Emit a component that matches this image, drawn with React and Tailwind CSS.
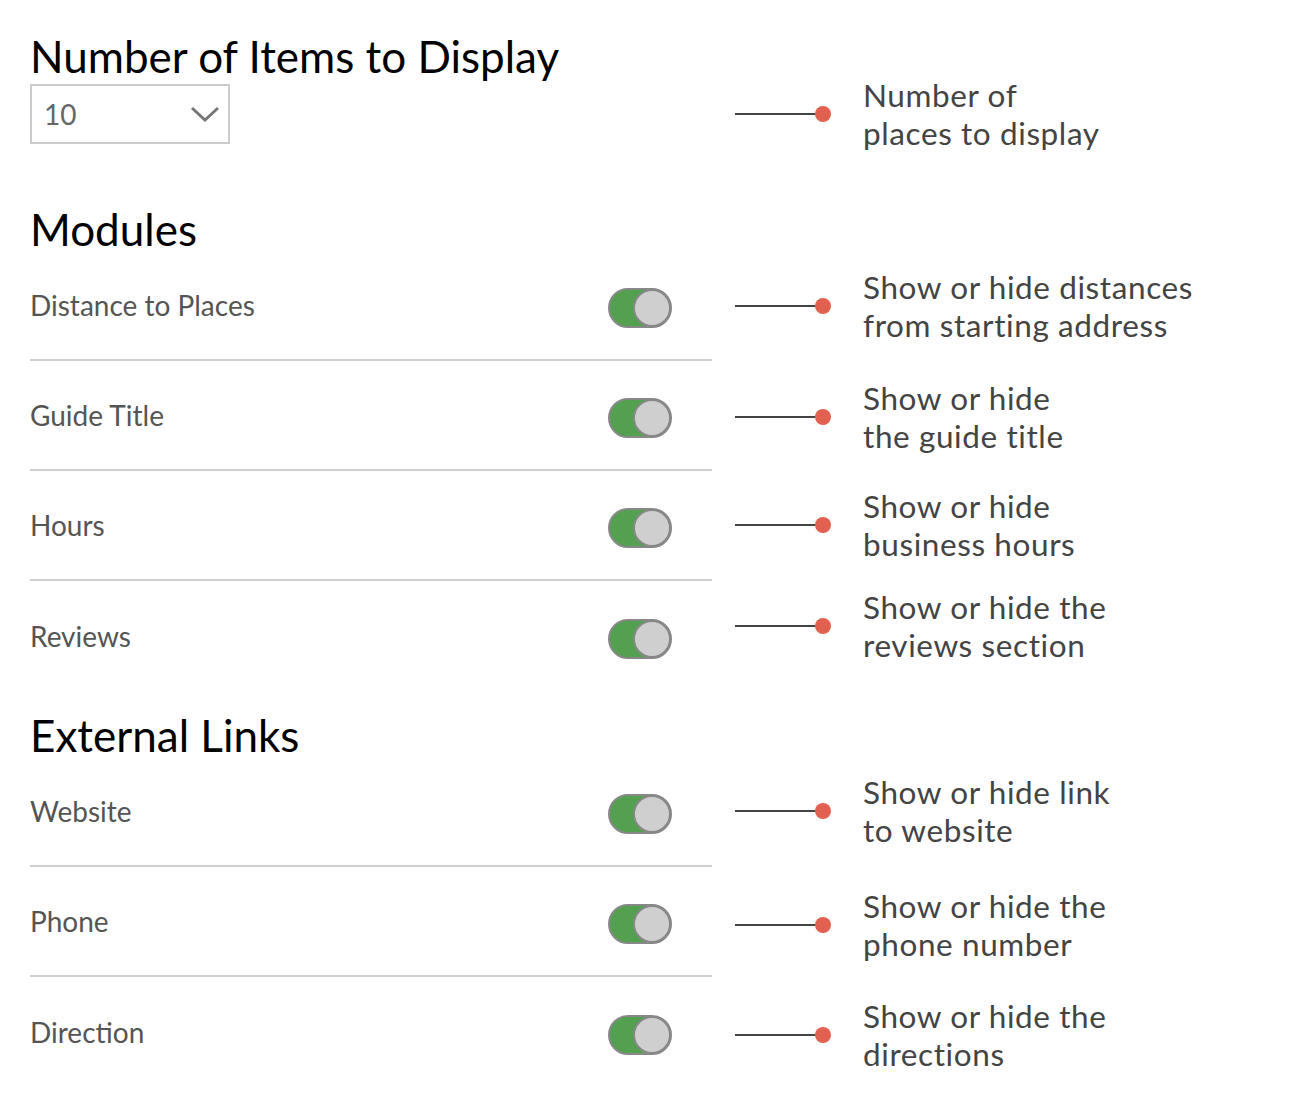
import React from "react";

function Toggle() {
  return (
    <div className="mt-[5px] flex h-[40px] w-[64px] items-center justify-end rounded-full border-2 border-[#888] bg-[#53a050]">
      <div className="h-[38px] w-[38px] -mr-[1px] rounded-full border-2 border-[#888] bg-[#cfcfcf]" />
    </div>
  );
}

function Note({ lines, shift = "" }) {
  return (
    <div className={`flex items-center ${shift}`}>
      <div className="h-[2px] w-[84px] bg-[#444]" />
      <div className="h-[16px] w-[16px] -ml-[4px] rounded-full bg-[#e2604f]" />
      <div className="ml-[32px] text-[31.5px] leading-[38px] tracking-[0.6px] text-[#444]">
        {lines.map((l) => (
          <div key={l} className="whitespace-nowrap">{l}</div>
        ))}
      </div>
    </div>
  );
}

function Row({ label, note, border = true, shift }) {
  return (
    <div className="flex h-[110px] items-center">
      <div
        className={`flex h-full w-[682px] shrink-0 items-center justify-between pr-[40px] ${
          border ? "border-b-2 border-[#d0d0d0]" : ""
        }`}
      >
        <span className="text-[28px] text-[#555]">{label}</span>
        <Toggle />
      </div>
      <div className="ml-[23px]">
        <Note lines={note} shift={shift} />
      </div>
    </div>
  );
}

export default function App() {
  return (
    <div
      className="min-h-[1104px] bg-white pl-[30px] pt-[28px]"
      style={{ fontFamily: "Lato, 'Open Sans', sans-serif" }}
    >
      <h1 className="text-[44px] leading-[56px] text-black">Number of Items to Display</h1>
      <div className="flex h-[60px] items-center">
        <div className="flex h-[60px] w-[200px] shrink-0 items-center justify-between border-2 border-[#cccccc] pl-[12px] pr-[8px]">
          <span className="text-[28px] text-[#666]">10</span>
          <svg width="30" height="20" viewBox="0 0 30 20">
            <path d="M2 4 L15 16 L28 4" fill="none" stroke="#777" strokeWidth="3" />
          </svg>
        </div>
        <div className="ml-[505px]">
          <Note lines={["Number of", "places to display"]} />
        </div>
      </div>

      <h2 className="mt-[63px] text-[44px] leading-[44px] text-black">Modules</h2>
      <Row label="Distance to Places" note={["Show or hide distances", "from starting address"]} />
      <Row label="Guide Title" note={["Show or hide", "the guide title"]} shift="mt-[2px]" />
      <Row label="Hours" note={["Show or hide", "business hours"]} shift="-mt-[2px]" />
      <Row label="Reviews" note={["Show or hide the", "reviews section"]} border={false} shift="-mt-[20px]" />

      <h2 className="mt-[22px] text-[44px] leading-[44px] text-black">External Links</h2>
      <Row label="Website" note={["Show or hide link", "to website"]} shift="-mt-[2px]" />
      <Row label="Phone" note={["Show or hide the", "phone number"]} shift="mt-[6px]" />
      <Row label="Direction" note={["Show or hide the", "directions"]} border={false} shift="mt-[6px]" />
    </div>
  );
}
